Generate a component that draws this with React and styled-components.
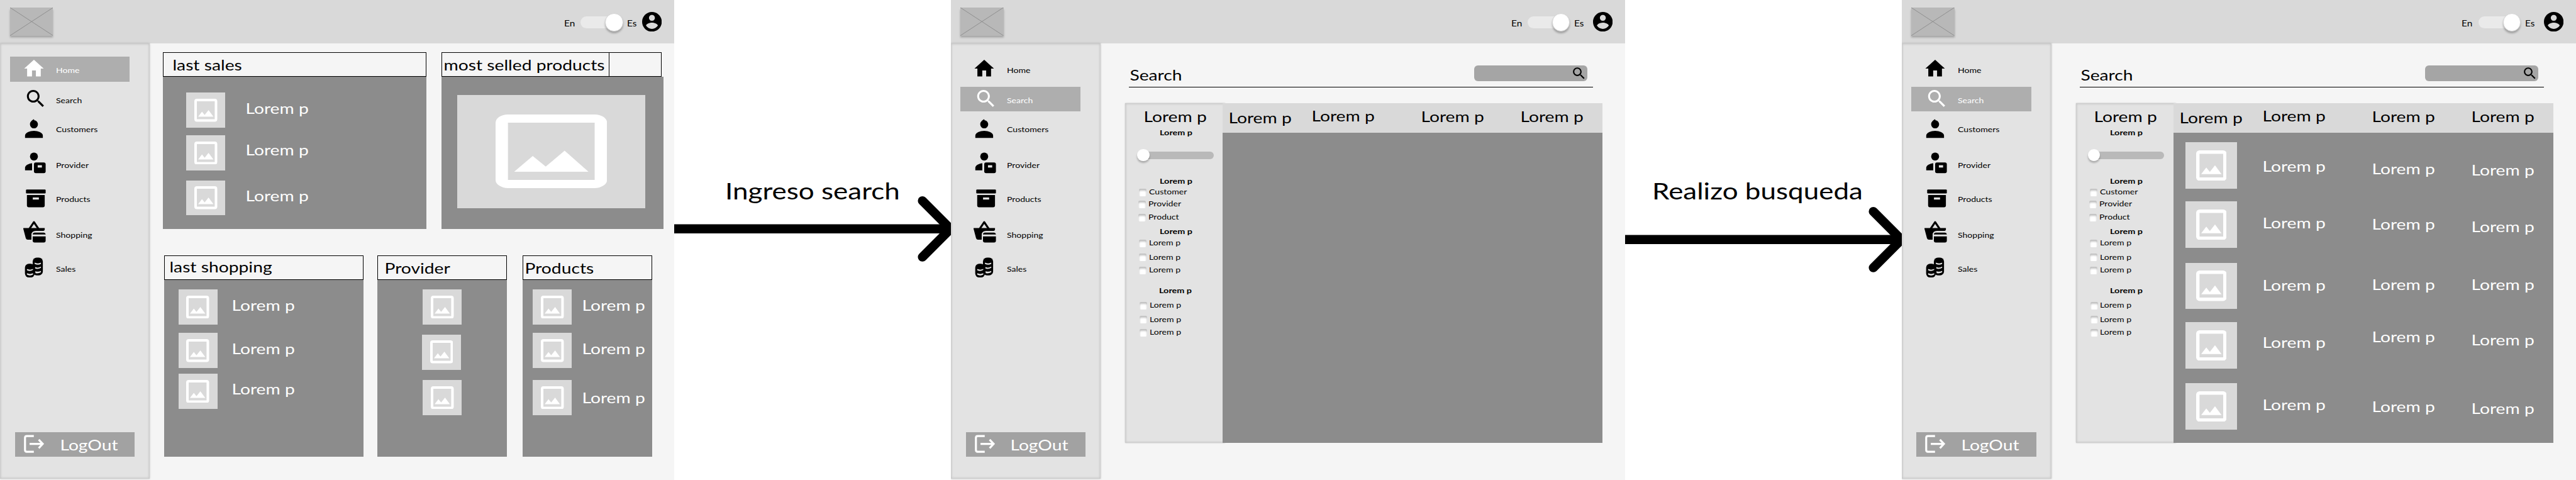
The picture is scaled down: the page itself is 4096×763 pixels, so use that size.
import React from "react";
import styled, { createGlobalStyle } from "styled-components";

const Global = createGlobalStyle`
  html, body { margin: 0; padding: 0; background: #fff; overflow: hidden; }
  *, *::before, *::after { box-sizing: border-box; }
`;

const Board = styled.div`
  display: flex;
  width: 5500px;
  height: 1024px;
  zoom: 0.744727;
  background: #fff;
  color: #000;
  font-family: Lato, "Liberation Sans", sans-serif;
`;

const Screen = styled.section`
  display: flex;
  flex-direction: column;
  flex: none;
  width: 1440px;
  height: 1024px;
  background: #f5f5f5;
  overflow: hidden;
`;

const TextBase = styled.span`
  display: block;
  flex: none;
  width: max-content;
  margin: ${(p) => p.$mt || 0}px 0 0 ${(p) => p.$ml || 0}px;
  white-space: nowrap;
  transform-origin: 0 0;
`;
const Title = styled(TextBase)`
  font-size: 32px;
  line-height: 40px;
  transform: translate(0.6px, 1.2px) scaleX(1.185);
`;
const Small = styled(TextBase)`
  font-size: 16px;
  line-height: 20px;
  transform: translateY(1.8px) scaleX(1.182);
`;
const Strong = styled(Small)`
  font-weight: 700;
  transform: translateY(1.8px) scaleX(1.21);
`;
const Lang = styled(TextBase)`
  font-size: 17.5px;
  line-height: 22px;
  transform: translateY(1.6px) scaleX(1.182);
`;
const FlowLabel = styled(TextBase)`
  font-size: 50px;
  line-height: 60px;
  transform: translateY(2.2px) scaleX(1.182);
`;

/* ---------- top bar ---------- */
const TopBar = styled.header`
  display: flex;
  flex: none;
  align-items: flex-start;
  height: 92px;
  padding: 0 27px 0 21px;
  background: #d9d9d9;
`;
const LogoBox = styled.div`
  width: 92px;
  height: 60px;
  margin-top: 16px;
  background: #b8b8b8;
  box-shadow: 0 4px 4px rgba(0, 0, 0, 0.25);
  svg { display: block; }
`;
const LangSwitch = styled.div`
  display: flex;
  align-items: flex-start;
  width: 162px;
  margin-left: auto;
  margin-right: ${(p) => p.$inset}px;
`;
const LangSlot = styled.div`
  width: ${(p) => p.$w}px;
`;
const Track = styled.div`
  position: relative;
  width: 80px;
  height: 26px;
  margin: 35px 19px 0 0;
  border-radius: 13px;
  background: #eaeaea;
`;
const Knob = styled.div`
  position: absolute;
  left: 52px;
  top: -6.5px;
  width: 38px;
  height: 38px;
  border: 1px solid #d4d4d4;
  border-radius: 50%;
  background: #fff;
  box-shadow: 0 4px 4px rgba(0, 0, 0, 0.25);
`;
const Avatar = styled.svg`
  display: block;
  width: 42px;
  height: 42px;
  margin-top: 25px;
`;

function Header({ inset }) {
  return (
    <TopBar>
      <LogoBox>
        <svg width="92" height="60" viewBox="0 0 92 60" stroke="#8a8a8a" strokeWidth="1.2">
          <path d="M0 0L92 60M92 0L0 60" />
        </svg>
      </LogoBox>
      <LangSwitch $inset={inset}>
        <LangSlot $w={36}><Lang $mt={37}>En</Lang></LangSlot>
        <Track><Knob /></Track>
        <LangSlot $w={27}><Lang $mt={38}>Es</Lang></LangSlot>
      </LangSwitch>
      <Avatar viewBox="2 2 20 20">
        <path d="M12 2C6.48 2 2 6.48 2 12s4.48 10 10 10 10-4.48 10-10S17.52 2 12 2zm0 3c1.66 0 3 1.34 3 3s-1.34 3-3 3-3-1.34-3-3 1.34-3 3-3zm0 14.2c-2.5 0-4.71-1.28-6-3.22.03-1.99 4-3.08 6-3.08 1.99 0 5.97 1.09 6 3.08-1.29 1.94-3.5 3.22-6 3.22z" />
      </Avatar>
    </TopBar>
  );
}

/* ---------- sidebar ---------- */
const Body = styled.div`
  display: flex;
  flex: 1;
  min-height: 0;
`;
const Side = styled.nav`
  position: relative;
  display: flex;
  flex-direction: column;
  flex: none;
  width: 320px;
  height: 930px;
  background: #e3e3e3;
  box-shadow: inset 0 0 4px 2px rgba(0, 0, 0, 0.12), 0 0 4px rgba(0, 0, 0, 0.2);
`;
const NavItem = styled.div`
  display: flex;
  flex: none;
  align-items: flex-start;
  width: 256px;
  height: 53px;
  margin: ${(p) => p.$gap}px 0 0 21px;
  color: ${(p) => (p.$active ? "#fff" : "#000")};
  background: ${(p) => (p.$active ? "#aeaeae" : "transparent")};
`;
const NavIcon = styled.svg`
  display: block;
  flex: none;
  width: 99px;
  height: 53px;
  overflow: visible;
  fill: currentColor;
`;
const LogOut = styled.button`
  display: flex;
  align-items: flex-start;
  width: 256px;
  height: 53px;
  margin: auto 0 47px 32px;
  padding: 0;
  border: 0;
  color: #fff;
  background: #a2a2a2;
  font-family: inherit;
  text-align: left;
`;
const LogOutIcon = styled.svg`
  display: block;
  flex: none;
  width: 95px;
  height: 53px;
  fill: none;
  stroke: currentColor;
  stroke-width: 4.3;
`;

const searchPath =
  "M15.5 14h-.79l-.28-.27C15.41 12.59 16 11.11 16 9.5 16 5.91 13.09 3 9.5 3S3 5.91 3 9.5 5.91 16 9.5 16c1.61 0 3.09-.59 4.23-1.57l.27.28v.79l5 4.99L20.49 19l-4.99-5zm-6 0C7.01 14 5 11.99 5 9.5S7.01 5 9.5 5 14 7.01 14 9.5 11.99 14 9.5 14z";

const hole = "#e3e3e3";
const icons = {
  Home: <path transform="translate(26 .5) scale(2.083)" d="M10 20v-6h4v6h5v-8h3L12 3 2 12h3v8z" />,
  Search: <path transform="translate(29.7 .4) scale(2.083)" d={searchPath} />,
  Customers: (
    <>
      <path d="M50.8 6C46 8.5 42.500 12 42.500 17A8.500 8.500 0 1 0 59.500 17C59.500 12.500 56 8.800 52 8.500z" />
      <path d="M32 46V41C32 35 42 31 51 31S70 35 70 41V46z" />
    </>
  ),
  Provider: (
    <>
      <circle cx="51" cy="10.500" r="8.500" />
      <path d="M32 40V34.500C32 29.500 40 25.800 47 25V40z" />
      <rect x="51" y="23" width="25" height="23" rx="4" />
      <rect x="59" y="29" width="9" height="5" fill={hole} />
    </>
  ),
  Products: (
    <>
      <rect x="34" y="7" width="42" height="8.500" rx="1.800" />
      <path d="M36 18.800H74V41Q74 45 70 45H40Q36 45 36 41z" />
      <rect x="48.500" y="24" width="13" height="4.500" fill={hole} />
    </>
  ),
  Shopping: (
    <>
      <path d="M41.500 15.500L51 1.500L60.500 15.500" fill="none" stroke="currentColor" strokeWidth="4.300" strokeLinejoin="round" />
      <path d="M28.500 14H74V17.500Q73.500 20.200 71 20.200H55Q45.600 20.200 45.600 29V39H38Q34.500 39 33.500 35.500L28.200 15.500z" />
      <path d="M48.300 28V27.500Q48.800 24 52.500 24H72Q75.500 24 76 27.500V28z" />
      <path d="M48.300 32H76V41Q76 45 72 45H52.300Q48.300 45 48.300 41z" />
    </>
  ),
  Sales: (
    <>
      <rect x="48.300" y="4.600" width="21.700" height="38" rx="8.500" />
      <rect x="31.800" y="17.700" width="20.700" height="29.300" rx="8.500" />
      <g fill={hole}>
        <path d="M52.500 15.500Q59.500 18.500 66 15.500V18Q59.500 21.500 52.500 18z" />
        <path d="M53.500 25Q59.500 27.500 66 24V26.500Q59.500 30.500 53.500 28z" />
        <path d="M54 33.500Q60 36 66 33V36Q60 39.500 54 37.500z" />
        <path d="M36 29Q42.500 32 49 29V31Q42.500 35 36 31.500z" />
        <path d="M36 38Q42.500 41 49 38V41Q42.500 45 36 41z" />
      </g>
    </>
  ),
};
const nav = [
  ["Home", 29],
  ["Search", 11],
  ["Customers", 10],
  ["Provider", 23],
  ["Products", 20],
  ["Shopping", 23],
  ["Sales", 19],
];

function Sidebar({ active }) {
  return (
    <Side>
      {nav.map(([name, gap]) => (
        <NavItem key={name} $gap={gap} $active={name === active}>
          <NavIcon viewBox="0 0 99 53">{icons[name]}</NavIcon>
          <Small $mt={18.5}>{name}</Small>
        </NavItem>
      ))}
      <LogOut>
        <LogOutIcon viewBox="0 0 95 53">
          <path d="M40 8.200H25Q21.200 8.200 21.200 12V38Q21.200 41.800 25 41.800H40" />
          <path d="M31 25H59M50.500 16L59 25L50.500 34" />
        </LogOutIcon>
        <Title $mt={5.6}>LogOut</Title>
      </LogOut>
    </Side>
  );
}

/* ---------- shared picture placeholder ---------- */
const Frame = styled.div`
  display: flex;
  flex: none;
  align-items: center;
  justify-content: center;
  width: ${(p) => p.$w}px;
  height: ${(p) => p.$h}px;
  background: #d9d9d9;
  svg { display: block; }
`;
function Picture({ w = 83, h = 75, iw = 49, ih = 49 }) {
  return (
    <Frame $w={w} $h={h}>
      <svg width={iw} height={ih} viewBox="0 0 18 18" preserveAspectRatio="none" fill="#fff">
        <path
          fillRule="evenodd"
          d="M2 0H16A2 2 0 0 1 18 2V16A2 2 0 0 1 16 18H2A2 2 0 0 1 0 16V2A2 2 0 0 1 2 0zM2 2V16H16V2z"
        />
        <path d="M3 14L6 10.150L8.100 12.750L11.150 8.860L15 14z" />
      </svg>
    </Frame>
  );
}

/* ---------- dashboard ---------- */
const Dashboard = styled.main`
  padding: 20px 0 0 28px;
`;
const CardRow = styled.div`
  display: flex;
  margin: ${(p) => p.$top || 0}px 0 0 ${(p) => p.$left || 0}px;
`;
const Card = styled.article`
  display: flex;
  flex-direction: column;
  flex: none;
  width: ${(p) => p.$w}px;
  height: ${(p) => p.$h}px;
  margin-left: ${(p) => p.$gap || 0}px;
  background: #8c8c8c;
`;
const CardHead = styled.div`
  display: flex;
  flex: none;
  height: 52px;
  background: #f5f5f5;
`;
const HeadCell = styled.div`
  width: ${(p) => (p.$w ? `${p.$w}px` : "auto")};
  flex: ${(p) => (p.$w ? "none" : 1)};
  margin-left: ${(p) => p.$shift || 0}px;
  border: 1px solid #000;
`;
const CardItem = styled.div`
  display: flex;
  align-items: flex-start;
  margin: ${(p) => p.$gap}px 0 0 ${(p) => p.$ml}px;
`;
const White = styled(Title)`
  color: #fff;
`;

function ListCard({ title, w, h, gap, titleX, titleY, textX, items }) {
  return (
    <Card $w={w} $h={h} $gap={gap}>
      <CardHead>
        <HeadCell><Title $mt={titleY} $ml={titleX}>{title}</Title></HeadCell>
      </CardHead>
      {items.map(([top, left, textTop], i) => (
        <CardItem key={i} $gap={top} $ml={left}>
          <Picture />
          {textX ? <White $mt={textTop} $ml={textX}>Lorem p</White> : null}
        </CardItem>
      ))}
    </Card>
  );
}

function HomeScreen() {
  return (
    <Screen>
      <Header inset={5} />
      <Body>
        <Sidebar active="Home" />
        <Dashboard>
          <CardRow>
            <ListCard title="last sales" w={563} h={377} titleX={19} titleY={3.6} textX={42.6}
              items={[[34, 50, 11], [16, 50, 9], [21, 50, 11]]} />
            <Card $w={475} $h={377} $gap={31}>
              <CardHead>
                <HeadCell $w={359}><Title $mt={3.6} $ml={3}>most selled products</Title></HeadCell>
                <HeadCell $w={113} $shift={-1} />
              </CardHead>
              <CardItem $gap={39} $ml={34}>
                <Picture w={402} h={241} iw={238} ih={157} />
              </CardItem>
            </Card>
          </CardRow>
          <CardRow $top={56} $left={2}>
            <ListCard title="last shopping" w={426} h={430} titleX={10} titleY={1.6} textX={30.5}
              items={[[21, 31, 11.6], [18, 31, 11.6], [12, 31, 10.6]]} />
            <ListCard title="Provider" w={276} h={430} gap={30} titleX={13.8} titleY={3.6}
              items={[[21, 97], [21, 95], [22, 97]]} />
            <ListCard title="Products" w={276} h={430} gap={34} titleX={3} titleY={3.6} textX={20.7}
              items={[[21, 22, 11.6], [18, 22, 11.6], [25, 22, 16.6]]} />
          </CardRow>
        </Dashboard>
      </Body>
    </Screen>
  );
}

/* ---------- search ---------- */
const SearchMain = styled.main`
  display: flex;
  flex-direction: column;
`;
const SearchHead = styled.div`
  display: flex;
  align-items: flex-start;
  width: 991px;
  height: 95px;
  margin-left: 60px;
  border-bottom: 1px solid #000;
`;
const SearchBar = styled.div`
  display: flex;
  justify-content: flex-end;
  width: 241px;
  height: 33px;
  margin: 48px 12px 0 auto;
  padding-right: 1px;
  border-radius: 8px;
  background: #a5a5a5;
  svg { display: block; margin-top: -1px; }
`;
const Content = styled.div`
  display: flex;
  margin: 33px 0 0 52px;
`;
const Filters = styled.aside`
  display: flex;
  flex-direction: column;
  flex: none;
  width: 214px;
  height: 726px;
  margin-right: -6px;
  background: #e3e3e3;
  box-shadow: inset 0 0 4px 2px rgba(0, 0, 0, 0.12), 0 0 3px rgba(0, 0, 0, 0.2);
`;
const Slider = styled.div`
  display: flex;
  align-items: center;
  width: 163px;
  height: 26px;
  margin: 25.2px 0 0 26px;
`;
const SliderKnob = styled.div`
  position: relative;
  flex: none;
  width: 26px;
  height: 26px;
  border-radius: 50%;
  background: #fff;
  box-shadow: 0 4px 4px rgba(0, 0, 0, 0.25);
`;
const SliderRail = styled.div`
  flex: 1;
  height: 16px;
  margin: 2px 0 0 -13px;
  border-radius: 8px;
  background: #b9b9b9;
`;
const CheckRow = styled.label`
  display: flex;
  align-items: flex-start;
  flex: none;
  height: 20px;
  margin: ${(p) => p.$gap}px 0 0 ${(p) => p.$ml}px;
`;
const CheckBox = styled.span`
  width: 16px;
  height: 16px;
  margin: 4px 5px 0 0;
  border-radius: 3px;
  background: #fff;
  box-shadow: inset 0 4px 4px rgba(0, 0, 0, 0.25);
`;
const Table = styled.div`
  position: relative;
  display: flex;
  flex-direction: column;
  flex: none;
  width: 812px;
  height: 726px;
  background: #8c8c8c;
`;
const TableHead = styled.div`
  display: grid;
  grid-template-columns: 177px 233.8px 212.5px auto;
  align-items: start;
  height: 64px;
  padding-left: 12.7px;
  background: #d9d9d9;
`;
const TableRow = styled.div`
  display: grid;
  grid-template-columns: 163.7px 233.8px 212.5px auto;
  align-items: start;
  height: 99px;
  margin: ${(p) => p.$gap}px 0 0 26px;
`;

const groups = [
  { gap: 31.8, ml: 74, rows: [["Customer", 3.2, 30], ["Provider", 6, 29], ["Product", 8, 29]] },
  { gap: 10, ml: 74, rows: [["Lorem p", 5, 30], ["Lorem p", 10, 30], ["Lorem p", 8, 30]] },
  { gap: 24, ml: 73, rows: [["Lorem p", 11, 31], ["Lorem p", 10, 31], ["Lorem p", 8, 31]] },
];
const headTops = [9.6, 5.6, 7.6, 6.6];
const results = [
  [20, [28.6, 34.6, 37.6]],
  [27, [24.6, 26.6, 31.6]],
  [32, [25.6, 24.6, 24.6]],
  [28, [20.6, 9.6, 15.6]],
  [31, [24.6, 28.6, 32.6]],
];

function SearchScreen({ rows = [] }) {
  return (
    <Screen>
      <Header inset={13} />
      <Body>
        <Sidebar active="Search" />
        <SearchMain>
          <SearchHead>
            <Title $mt={46.6} $ml={1.8}>Search</Title>
            <SearchBar>
              <svg width="34" height="34" viewBox="0 0 24 24"><path d={searchPath} /></svg>
            </SearchBar>
          </SearchHead>
          <Content>
            <Filters>
              <Title $mt={7.6} $ml={38.8}>Lorem p</Title>
              <Strong $mt={5.2} $ml={73.5}>Lorem p</Strong>
              <Slider><SliderKnob /><SliderRail /></Slider>
              {groups.map((g, i) => (
                <React.Fragment key={i}>
                  <Strong $mt={g.gap} $ml={g.ml - 0.5}>Lorem p</Strong>
                  {g.rows.map(([text, gap, ml], j) => (
                    <CheckRow key={j} $gap={gap} $ml={ml}>
                      <CheckBox />
                      <Small>{text}</Small>
                    </CheckRow>
                  ))}
                </React.Fragment>
              ))}
            </Filters>
            <Table>
              <TableHead>
                {headTops.map((t, i) => <Title key={i} $mt={t}>Lorem p</Title>)}
              </TableHead>
              {rows.map(([gap, tops], i) => (
                <TableRow key={i} $gap={gap}>
                  <Picture w={110} h={99} iw={65} ih={65} />
                  {tops.map((t, j) => <White key={j} $mt={t}>Lorem p</White>)}
                </TableRow>
              ))}
            </Table>
          </Content>
        </SearchMain>
      </Body>
    </Screen>
  );
}

/* ---------- connecting arrows ---------- */
const Flow = styled.div`
  flex: none;
  width: 590px;
  height: 1024px;
  padding-top: 374.6px;
  overflow: hidden;
`;
const ArrowShape = styled.svg`
  display: block;
  width: 590px;
  height: 150px;
  margin-top: ${(p) => p.$top}px;
  fill: none;
  stroke: #000;
  stroke-width: 19.5;
`;
function Arrow({ label, x, top }) {
  return (
    <Flow>
      <FlowLabel $ml={x}>{label}</FlowLabel>
      <ArrowShape $top={top} viewBox="0 0 590 150">
        <path d="M0 75H590" />
        <path d="M530 15L590 75L530 135" strokeLinecap="round" strokeLinejoin="round" />
      </ArrowShape>
    </Flow>
  );
}

export default function App() {
  return (
    <>
      <Global />
      <Board>
        <HomeScreen />
        <Arrow label="Ingreso search" x={108} top={-21.6} />
        <SearchScreen />
        <Arrow label="Realizo busqueda" x={58} top={2.4} />
        <SearchScreen rows={results} />
      </Board>
    </>
  );
}
